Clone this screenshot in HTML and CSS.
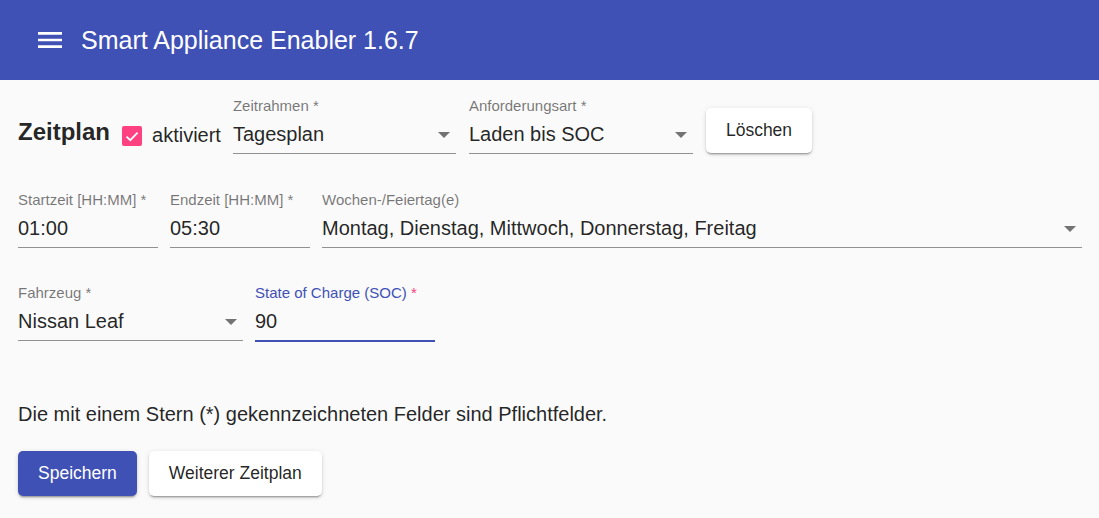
FILE: index.html
```html
<!DOCTYPE html>
<html lang="de">
<head>
<meta charset="utf-8">
<title>Smart Appliance Enabler</title>
<link rel="stylesheet" href="styles.css">
</head>
<body>
<header class="toolbar">
  <svg class="menu-icon" viewBox="0 0 24 24" width="32" height="32" aria-hidden="true"><path d="M3 18h18v-2H3v2zm0-5h18v-2H3v2zm0-7v2h18V6H3z" fill="#fff"/></svg>
  <span class="toolbar-title">Smart Appliance Enabler 1.6.7</span>
</header>
<main class="content">
  <div class="form">
    <div class="row row-head">
      <h2 class="section-title">Zeitplan</h2>
      <label class="check">
        <span class="check-box"><svg viewBox="0 0 20 20" width="20" height="20"><path d="M4.5 10.6 8.3 14.2 15.6 6.6" fill="none" stroke="#fff" stroke-width="1.8"/></svg></span>
        <span>aktiviert</span>
      </label>
      <div class="field w223">
        <span class="field-label">Zeitrahmen *</span>
        <div class="field-value select"><span>Tagesplan</span><i class="arrow"></i></div>
      </div>
      <div class="field w224">
        <span class="field-label">Anforderungsart *</span>
        <div class="field-value select"><span>Laden bis SOC</span><i class="arrow"></i></div>
      </div>
      <button class="btn btn-raised btn-head">Löschen</button>
    </div>
    <div class="row">
      <div class="field w140">
        <span class="field-label">Startzeit [HH:MM] *</span>
        <div class="field-value"><span>01:00</span></div>
      </div>
      <div class="field w140">
        <span class="field-label">Endzeit [HH:MM] *</span>
        <div class="field-value"><span>05:30</span></div>
      </div>
      <div class="field grow">
        <span class="field-label">Wochen-/Feiertag(e)</span>
        <div class="field-value select"><span>Montag, Dienstag, Mittwoch, Donnerstag, Freitag</span><i class="arrow"></i></div>
      </div>
    </div>
    <div class="row">
      <div class="field w225">
        <span class="field-label">Fahrzeug *</span>
        <div class="field-value select"><span>Nissan Leaf</span><i class="arrow"></i></div>
      </div>
      <div class="field w180 focused">
        <span class="field-label">State of Charge (SOC)<span class="req"> *</span></span>
        <div class="field-value"><span>90</span></div>
      </div>
    </div>
  </div>
  <p class="hint">Die mit einem Stern (*) gekennzeichneten Felder sind Pflichtfelder.</p>
  <div class="actions">
    <button class="btn btn-primary">Speichern</button>
    <button class="btn btn-raised">Weiterer Zeitplan</button>
  </div>
</main>
</body>
</html>
```

FILE: styles.css
```css
html, body {
  margin: 0;
  padding: 0;
}
body {
  background: #fafafa;
  font-family: "Liberation Sans", Arial, sans-serif;
  color: rgba(0, 0, 0, 0.87);
  width: 1099px;
  height: 518px;
  overflow: hidden;
}
.toolbar {
  height: 80px;
  background: #3f51b5;
  color: #fff;
  display: flex;
  align-items: center;
  padding-left: 34px;
}
.menu-icon {
  display: block;
}
.toolbar-title {
  margin-left: 15px;
  font-size: 25px;
  font-weight: 400;
  line-height: 30px;
}
.content {
  padding: 17px 17px 0 18px;
}
.form {
  display: flex;
  flex-direction: column;
  gap: 36px;
}
.row {
  display: flex;
  align-items: flex-start;
  gap: 12px;
}
.row-head {
  margin-bottom: 1px;
}
.row-head .field {
  margin-right: 1px;
}
.section-title {
  margin: 21px 0 0;
  font-size: 24px;
  line-height: 28px;
  font-weight: 700;
}
.check {
  display: flex;
  align-items: flex-start;
  gap: 10px;
  margin-top: 26px;
  font-size: 20px;
  line-height: 24px;
}
.check-box {
  width: 20px;
  height: 20px;
  border-radius: 2px;
  background: #ff4081;
  display: block;
  margin-top: 3px;
}
.check-box svg {
  display: block;
}
.field {
  display: flex;
  flex-direction: column;
}
.w223 { width: 223px; }
.w224 { width: 224px; }
.w140 { width: 140px; }
.w225 { width: 225px; }
.w180 { width: 180px; }
.grow { flex: 1; }
.field-label {
  font-size: 15px;
  line-height: 18px;
  color: rgba(0, 0, 0, 0.54);
  white-space: nowrap;
}
.field-value {
  margin-top: 7px;
  font-size: 20px;
  line-height: 24px;
  padding-bottom: 7px;
  border-bottom: 1px solid rgba(0, 0, 0, 0.42);
  display: flex;
  align-items: center;
  justify-content: space-between;
  white-space: nowrap;
}
.focused .field-label {
  color: #3f51b5;
}
.focused .req {
  color: #ff4081;
}
.focused .field-value {
  border-bottom: 2px solid #3f51b5;
}
.arrow {
  width: 0;
  height: 0;
  border-left: 6px solid transparent;
  border-right: 6px solid transparent;
  border-top: 6px solid rgba(0, 0, 0, 0.54);
  margin-right: 6px;
  margin-top: 1px;
}
.btn {
  height: 45px;
  padding: 0 20px;
  border: none;
  border-radius: 5px;
  font-family: "Liberation Sans", Arial, sans-serif;
  font-size: 17.5px;
  font-weight: 400;
  cursor: pointer;
  box-shadow: 0 3px 1px -2px rgba(0, 0, 0, 0.2), 0 2px 2px 0 rgba(0, 0, 0, 0.14), 0 1px 5px 0 rgba(0, 0, 0, 0.12);
}
.btn-raised {
  background: #fff;
  color: rgba(0, 0, 0, 0.87);
}
.btn-primary {
  background: #3f51b5;
  color: #fff;
}
.btn-head {
  margin-top: 11px;
}
.hint {
  margin: 60px 0 0;
  font-size: 20px;
  line-height: 24px;
}
.actions {
  display: flex;
  gap: 12px;
  margin-top: 25px;
}
```
